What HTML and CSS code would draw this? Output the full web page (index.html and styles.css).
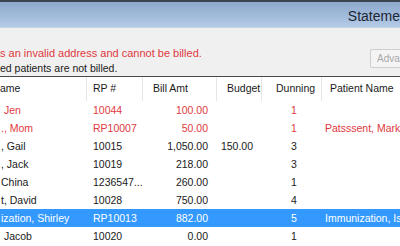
FILE: index.html
```html
<!DOCTYPE html>
<html lang="en">
<head>
  <meta charset="UTF-8">
  <title>Statements</title>
  <link rel="stylesheet" href="styles.css">
</head>
<body>
  <!-- Window title bar -->
  <div class="titlebar">
    <div class="title">Stateme</div>
  </div>

  <!-- Notices -->
  <div class="notice">
    <div class="messages">
      <div class="msg error">s an invalid address and cannot be billed.</div>
      <div class="msg">ed patients are not billed.</div>
    </div>
    <button class="advanced" disabled>Adva</button>
  </div>

  <!-- Statement grid -->
  <div class="grid">
    <div class="row head">
      <div class="cell">ame</div>
      <div class="cell">RP #</div>
      <div class="cell">Bill Amt</div>
      <div class="cell">Budget</div>
      <div class="cell">Dunning</div>
      <div class="cell">Patient Name</div>
    </div>
    <div class="row red">
      <div class="cell">&nbsp;Jen</div>
      <div class="cell">10044</div>
      <div class="cell num">100.00</div>
      <div class="cell num"></div>
      <div class="cell dun">1</div>
      <div class="cell"></div>
    </div>
    <div class="row red">
      <div class="cell">., Mom</div>
      <div class="cell">RP10007</div>
      <div class="cell num">50.00</div>
      <div class="cell num"></div>
      <div class="cell dun">1</div>
      <div class="cell">Patsssent, Mark</div>
    </div>
    <div class="row">
      <div class="cell">, Gail</div>
      <div class="cell">10015</div>
      <div class="cell num">1,050.00</div>
      <div class="cell num">150.00</div>
      <div class="cell dun">3</div>
      <div class="cell"></div>
    </div>
    <div class="row">
      <div class="cell">, Jack</div>
      <div class="cell">10019</div>
      <div class="cell num">218.00</div>
      <div class="cell num"></div>
      <div class="cell dun">3</div>
      <div class="cell"></div>
    </div>
    <div class="row">
      <div class="cell">China</div>
      <div class="cell">1236547...</div>
      <div class="cell num">260.00</div>
      <div class="cell num"></div>
      <div class="cell dun">1</div>
      <div class="cell"></div>
    </div>
    <div class="row">
      <div class="cell">t, David</div>
      <div class="cell">10028</div>
      <div class="cell num">750.00</div>
      <div class="cell num"></div>
      <div class="cell dun">4</div>
      <div class="cell"></div>
    </div>
    <div class="row selected">
      <div class="cell">ization, Shirley</div>
      <div class="cell">RP10013</div>
      <div class="cell num">882.00</div>
      <div class="cell num"></div>
      <div class="cell dun">5</div>
      <div class="cell">Immunization, Is</div>
    </div>
    <div class="row">
      <div class="cell">&nbsp;Jacob</div>
      <div class="cell">10020</div>
      <div class="cell num">0.00</div>
      <div class="cell num"></div>
      <div class="cell dun">1</div>
      <div class="cell"></div>
    </div>
  </div>
</body>
</html>
```

FILE: styles.css
```css
body {
  margin: 0;
  padding: 0;
  width: 400px;
  height: 246px;
  overflow: hidden;
  background-color: #fff;
  font-family: "Liberation Sans", Arial, sans-serif;
  font-size: 10.5px;
  color: #1a1a1a;
}

/* Title bar */
.titlebar {
  height: 25px;
  border-top: 2px solid #3c4450;
  border-bottom: 1px solid #c4d4e6;
  background: linear-gradient(#8fa9cc, #a2bcdc 60%, #b6cce8);
  display: flex;
  justify-content: flex-end;
}
.titlebar .title {
  font-size: 14px;
  color: #1e2633;
  line-height: 28px;
  white-space: nowrap;
}

/* Notices */
.notice {
  height: 48px;
  background-color: #f0f0f0;
  display: flex;
  justify-content: space-between;
  align-items: flex-start;
}
.notice .messages {
  padding-top: 18px;
  white-space: nowrap;
}
.msg {
  height: 15px;
  line-height: 15px;
}
.msg.error {
  color: #e0393e;
  font-size: 11px;
}
.advanced {
  margin-top: 21px;
  width: 30px;
  height: 19px;
  border: 1px solid #cfcfcf;
  border-right: none;
  border-radius: 2px 0 0 2px;
  background-color: #f4f4f4;
  color: #a8a8a8;
  font-family: inherit;
  font-size: 10px;
  text-align: left;
  padding: 0 0 0 6px;
  white-space: nowrap;
}

/* Grid */
.grid {
  border-top: 1px solid #4a4a4a;
  white-space: nowrap;
}
.row {
  display: grid;
  grid-template-columns: 87px 56px 74px 45px 60px 78px;
  height: 18px;
  line-height: 18px;
}
.row .cell {
  overflow: hidden;
  padding-left: 6px;
}
.row .cell:first-child {
  padding-left: 1px;
}
.row .num {
  text-align: right;
  padding: 0 9px 0 0;
}
.row .dun {
  padding-left: 29px;
}
.row .cell:last-child {
  padding-left: 3px;
}
.row.head {
  height: 24px;
  line-height: 23px;
  background-color: #fff;
}
.row.head .cell {
  border-right: 1px solid #e6e6e6;
  text-align: left;
}
.row.head .cell:nth-child(1) { padding-left: 0; }
.row.head .cell:nth-child(2) { padding-left: 6px; }
.row.head .cell:nth-child(3) { padding-left: 10px; }
.row.head .cell:nth-child(4) { padding-left: 10px; }
.row.head .cell:nth-child(5) { padding-left: 14px; }
.row.head .cell:nth-child(6) { padding-left: 8px; border-right: none; }
.red {
  color: #e0393e;
}
.selected {
  background-color: #3399ff;
  color: #fff;
}
```
